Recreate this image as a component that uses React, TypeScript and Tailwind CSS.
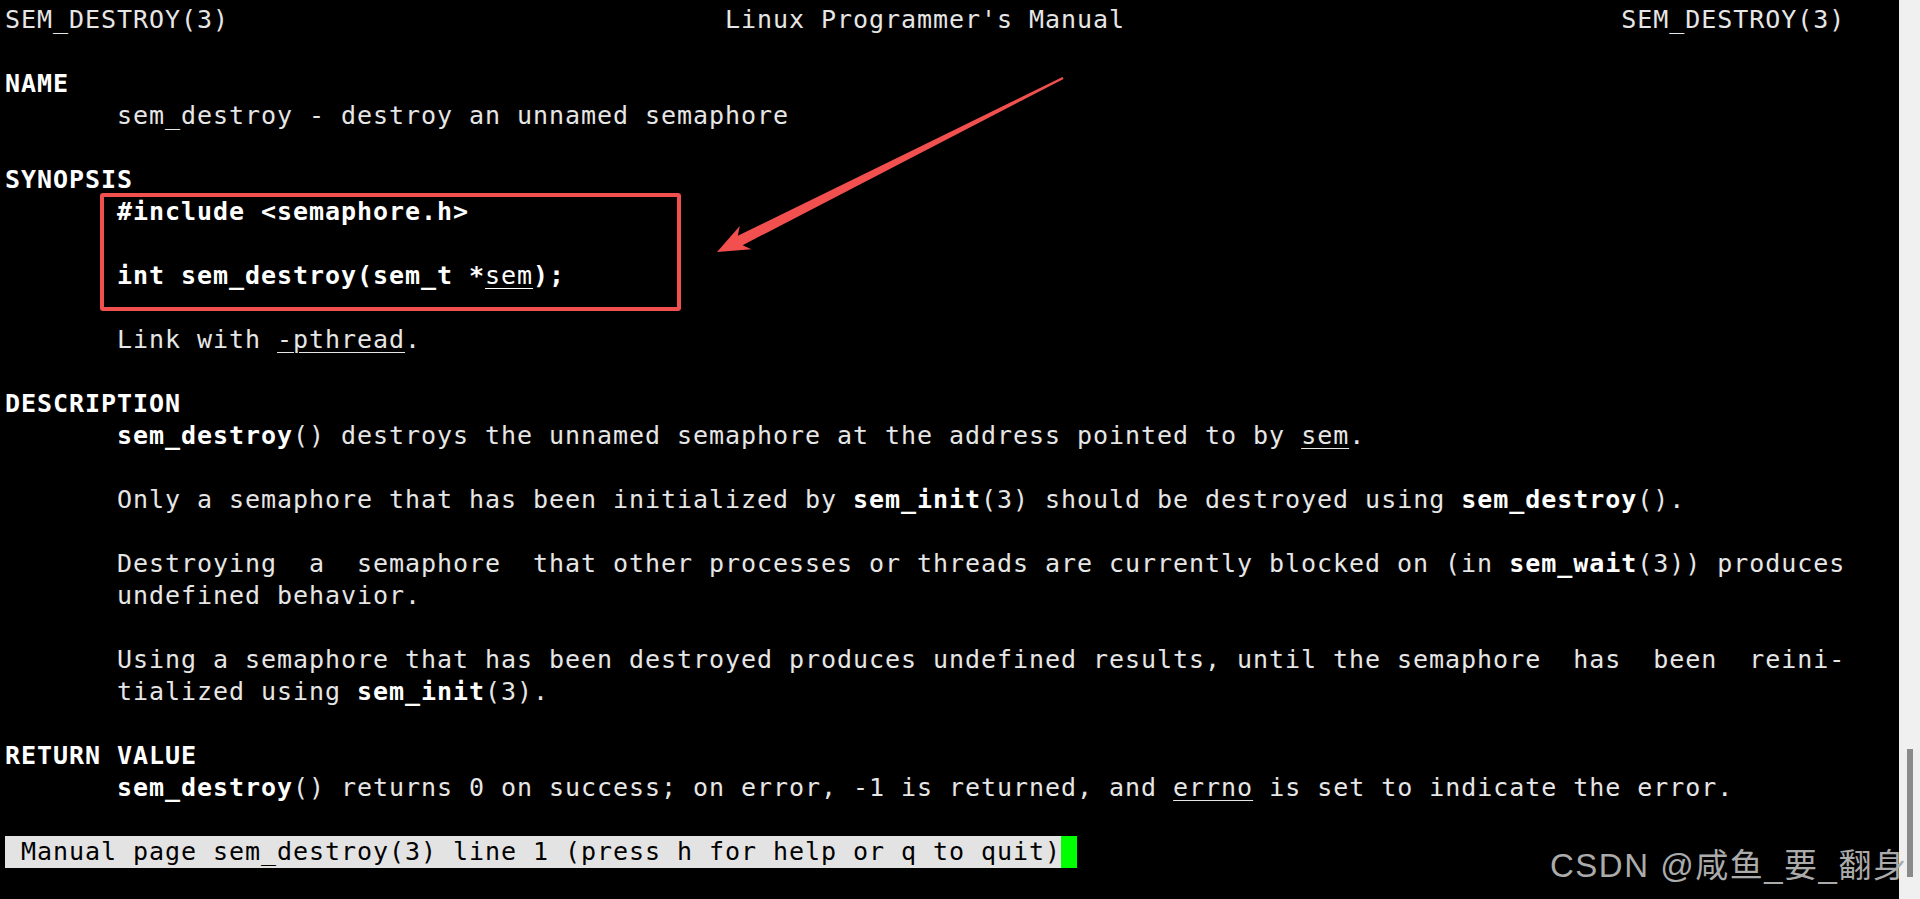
import React from "react";

const B = ({ children }: { children: React.ReactNode }) => (
  <span className="font-bold text-white">{children}</span>
);
const U = ({ children }: { children: React.ReactNode }) => (
  <span className="underline decoration-1 underline-offset-[4px]">{children}</span>
);
const BU = ({ children }: { children: React.ReactNode }) => (
  <span className="text-white underline decoration-1 underline-offset-[4px]">{children}</span>
);

const Line = ({ children }: { children?: React.ReactNode }) => (
  <div className="h-[32px] leading-[32px] whitespace-pre">{children ?? " "}</div>
);

const IND = "       ";

export default function App() {
  const header =
    "SEM_DESTROY(3)" +
    " ".repeat(31) +
    "Linux Programmer's Manual" +
    " ".repeat(31) +
    "SEM_DESTROY(3)";
  return (
    <div className="relative w-[1920px] h-[899px] bg-black flex overflow-hidden">
      <div className="flex-1 pt-[4px] pl-[5px] font-['DejaVu_Sans_Mono',monospace] text-[25px] tracking-[0.95px] text-[#e6e6e6]">
        <Line>{header}</Line>
        <Line />
        <Line>
          <B>NAME</B>
        </Line>
        <Line>{IND}sem_destroy - destroy an unnamed semaphore</Line>
        <Line />
        <Line>
          <B>SYNOPSIS</B>
        </Line>
        <Line>
          {IND}
          <B>#include &lt;semaphore.h&gt;</B>
        </Line>
        <Line />
        <Line>
          {IND}
          <B>int sem_destroy(sem_t *</B>
          <BU>sem</BU>
          <B>);</B>
        </Line>
        <Line />
        <Line>
          {IND}Link with <U>-pthread</U>.
        </Line>
        <Line />
        <Line>
          <B>DESCRIPTION</B>
        </Line>
        <Line>
          {IND}
          <B>sem_destroy</B>() destroys the unnamed semaphore at the address pointed to by <U>sem</U>.
        </Line>
        <Line />
        <Line>
          {IND}Only a semaphore that has been initialized by <B>sem_init</B>(3) should be destroyed using{" "}
          <B>sem_destroy</B>().
        </Line>
        <Line />
        <Line>
          {IND}Destroying  a  semaphore  that other processes or threads are currently blocked on (in{" "}
          <B>sem_wait</B>(3)) produces
        </Line>
        <Line>{IND}undefined behavior.</Line>
        <Line />
        <Line>
          {IND}Using a semaphore that has been destroyed produces undefined results, until the semaphore  has  been  reini-
        </Line>
        <Line>
          {IND}tialized using <B>sem_init</B>(3).
        </Line>
        <Line />
        <Line>
          <B>RETURN VALUE</B>
        </Line>
        <Line>
          {IND}
          <B>sem_destroy</B>() returns 0 on success; on error, -1 is returned, and <U>errno</U> is set to indicate the
          error.
        </Line>
        <Line />
        <div className="h-[32px] leading-[32px] whitespace-pre flex">
          <span className="bg-[#e3e3e3] text-black">
            {" Manual page sem_destroy(3) line 1 (press h for help or q to quit)"}
          </span>
          <span className="w-[16px] h-[32px] bg-[#00ff00]" />
        </div>
      </div>

      <div className="w-[21px] bg-[#f0f0f0] pt-[749px] pl-[8px]">
        <div className="w-[6px] h-[128px] bg-[#8a8a8a]" />
      </div>

      {/* red highlight box */}
      <div className="absolute left-[100px] top-[193px] w-[581px] h-[118px] border-[4px] border-[#f24f4f] rounded-[3px]" />

      {/* red arrow */}
      <svg className="absolute left-0 top-0" width="1920" height="899" viewBox="0 0 1920 899">
        <polygon
          points="717,252 751.4,249.2 742.6,245.2 1063.5,78.9 1062.5,77.1 737.8,235.8 739.8,226"
          fill="#f24f4f"
        />
      </svg>

      {/* watermark */}
      <div className="absolute left-[1550px] top-[849px] whitespace-nowrap leading-none text-[33px] tracking-[1.5px] text-[#ababab] font-['Liberation_Sans','Noto_Sans_CJK_SC',sans-serif]">
        CSDN @咸鱼_要_翻身
      </div>
    </div>
  );
}
